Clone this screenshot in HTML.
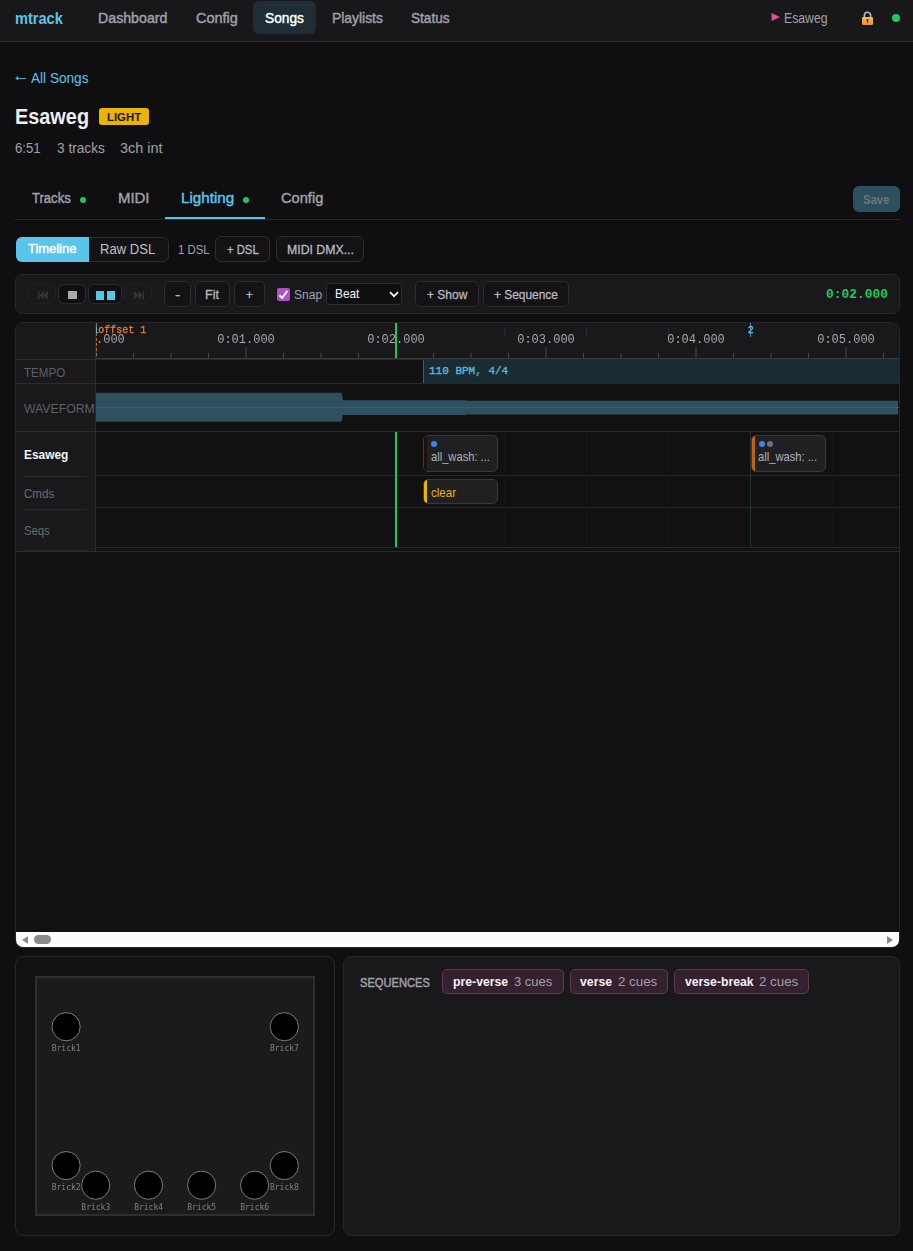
<!DOCTYPE html>
<html lang="en"><head>
<meta charset="utf-8">
<title>mtrack - Esaweg</title>
<style>
*{box-sizing:border-box;margin:0;padding:0}
html,body{width:913px;height:1251px;overflow:hidden;background:#0f0f11}
body{position:relative;font-family:"Liberation Sans","DejaVu Sans",sans-serif;color:#e4e4e7;font-size:14px}
.abs{position:absolute;white-space:nowrap}
.t{position:absolute;white-space:nowrap;display:inline-block;line-height:1.2;transform-origin:0 50%}
.mono{font-family:"Liberation Mono","DejaVu Sans Mono",monospace}
.semi{-webkit-text-stroke:0.45px currentColor}
.med{-webkit-text-stroke:0.3px currentColor}
.b{font-weight:700}
#nav{position:absolute;left:0;top:0;width:913px;height:42px;background:#18181b;border-bottom:1px solid #2a2a2e}
.btn{position:absolute;border:1px solid #2c2c31;border-radius:6px;background:#131315}
.cue{position:absolute;background:#202023;border:1px solid #38383d;border-radius:5px;overflow:hidden}
.cue i{position:absolute;top:4.7px;width:6.4px;height:6.4px;border-radius:50%}
.cue b{position:absolute;left:0;top:0;width:3px;height:100%}
.pill{position:absolute;top:969px;height:25px;background:#35202f;border:1px solid #643652;border-radius:5px}
.hl{position:absolute;height:1px}
.vl{position:absolute;width:1px}
</style>
</head>
<body>

<div id="nav">
<div class="abs" style="left:253px;top:1px;width:63px;height:33px;background:#1f2d36;border-radius:6px"></div>
<div class="t b" style="left: 15px; top: 8.99px; font-size: 16.5px; color: rgb(90, 197, 236); transform: scaleX(0.8835);">mtrack</div>
<div class="t semi" id="rnav" style="left: 98px; top: 9px; font-size: 15.5px; color: rgb(161, 161, 170); transform: scaleX(0.915);">Dashboard</div>
<div class="t semi" style="left: 196.01px; top: 9px; font-size: 15.5px; color: rgb(161, 161, 170); transform: scaleX(0.9327);">Config</div>
<div class="t semi" style="left: 265px; top: 9px; font-size: 15.5px; color: rgb(255, 255, 255); transform: scaleX(0.8872);">Songs</div>
<div class="t semi" style="left: 332px; top: 9px; font-size: 15.5px; color: rgb(161, 161, 170); transform: scaleX(0.8952);">Playlists</div>
<div class="t semi" style="left: 411px; top: 9px; font-size: 15.5px; color: rgb(161, 161, 170); transform: scaleX(0.8769);">Status</div>
<svg class="abs" style="left:771px;top:12px" width="10" height="10" viewBox="0 0 10 10"><polygon points="0.6,0.9 9,4.9 0.6,8.9" fill="#ec4899"></polygon></svg>
<div class="t" style="left: 784px; top: 11.1px; font-size: 13.8px; color: rgb(161, 161, 170); transform: scaleX(0.8881);">Esaweg</div>
<svg class="abs" style="left:861px;top:11px" width="13" height="15" viewBox="0 0 13 15">
<defs><linearGradient id="lk" x1="0" y1="0" x2="0" y2="1"><stop offset="0" stop-color="#f8c04a"></stop><stop offset="1" stop-color="#f08a3e"></stop></linearGradient></defs>
<path d="M3.4 7V4.3a3.1 3.1 0 0 1 6.2 0V7" fill="none" stroke="#b9b9c4" stroke-width="1.6"></path>
<rect x="1" y="6" width="11" height="8" rx="1.3" fill="url(#lk)"></rect>
<circle cx="6.5" cy="9.2" r="1.15" fill="#3d3430"></circle><rect x="6" y="9.4" width="1" height="2.6" fill="#3d3430"></rect>
</svg>
<div class="abs" style="left:892px;top:14px;width:8.4px;height:8.4px;border-radius:50%;background:#22c55e"></div>
</div>
<div class="t" style="left: 12.27px; top: 65.96px; font-size: 17px; color: rgb(90, 197, 236); transform: scaleX(1.0591);">←</div>
<div class="t" style="left: 31px; top: 70px; font-size: 14.1px; color: rgb(90, 197, 236); transform: scaleX(0.9653);">All Songs</div>
<div class="t b" style="left: 14.78px; top: 103px; font-size: 22.5px; color: rgb(238, 238, 240); transform: scaleX(0.8834);">Esaweg</div>
<div class="abs" style="left:99px;top:108px;width:50px;height:17px;background:#eab308;border-radius:3px"></div>
<div class="t b" style="left: 107px; top: 110.85px; font-size: 10.8px; color: rgb(26, 23, 8); transform: scaleX(1.0526);">LIGHT</div>
<div class="t" style="left: 15px; top: 140.95px; font-size: 13.8px; color: rgb(161, 161, 170); transform: scaleX(0.9563);">6:51</div>
<div class="t" style="left: 57px; top: 141.27px; font-size: 13.8px; color: rgb(161, 161, 170); transform: scaleX(0.9902);">3 tracks</div>
<div class="t" style="left: 120px; top: 141.37px; font-size: 13.8px; color: rgb(161, 161, 170); transform: scaleX(1.0439);">3ch int</div>
<div class="hl" style="left:15px;top:219px;width:885px;background:#2a2a2e"></div>
<div class="abs" style="left:165px;top:217px;width:100px;height:2px;background:#5ac5ec"></div>
<div class="t semi" id="rtab" style="left: 31.54px; top: 189px; font-size: 15.5px; color: rgb(161, 161, 170); transform: scaleX(0.843);">Tracks</div>
<div class="t semi" style="left: 118px; top: 189px; font-size: 15.5px; color: rgb(161, 161, 170); transform: scaleX(0.9634);">MIDI</div>
<div class="t semi" style="left: 181px; top: 189px; font-size: 15.5px; color: rgb(90, 197, 236); transform: scaleX(0.9783);">Lighting</div>
<div class="t semi" style="left: 281px; top: 189px; font-size: 15.5px; color: rgb(161, 161, 170); transform: scaleX(0.9441);">Config</div>
<div class="abs" style="left:79.8px;top:196.7px;width:6.4px;height:6.4px;border-radius:50%;background:#22c55e"></div>
<div class="abs" style="left:242.9px;top:196.7px;width:6.4px;height:6.4px;border-radius:50%;background:#22c55e"></div>
<div class="abs" style="left:853px;top:186px;width:47px;height:26px;border-radius:6px;background:#2b5160"></div>
<div class="t b" style="left: 863.01px; top: 192.1px; font-size: 13.5px; color: rgb(117, 115, 117); transform: scaleX(0.8315);">Save</div>
<div class="abs" style="left:16px;top:237px;width:153px;height:25px;border:1px solid #2c2c31;border-radius:6px;background:#131315"></div>
<div class="abs" style="left:16px;top:237px;width:73px;height:25px;background:#5ac5ec;border-radius:6px 0 0 6px"></div>
<div class="t semi" style="left: 28px; top: 241.46px; font-size: 13.2px; color: rgb(255, 255, 255); transform: scaleX(0.9802);">Timeline</div>
<div class="t" style="left: 100.43px; top: 241.95px; font-size: 13.8px; color: rgb(192, 192, 200); transform: scaleX(0.9481);">Raw DSL</div>
<div class="t" style="left: 178px; top: 243px; font-size: 12.4px; color: rgb(161, 161, 170); transform: scaleX(0.92);">1 DSL</div>
<div class="btn" style="left:215px;top:236px;width:55px;height:26px"></div>
<div class="t med" style="left: 227px; top: 243px; font-size: 12.4px; color: rgb(184, 184, 192); transform: scaleX(0.9105);">+ DSL</div>
<div class="btn" style="left:276px;top:236px;width:88px;height:26px"></div>
<div class="t med" style="left: 287px; top: 243px; font-size: 12.4px; color: rgb(184, 184, 192); transform: scaleX(0.9918);">MIDI DMX...</div>
<div class="abs" style="left:15px;top:274px;width:885px;height:40px;background:#19191c;border:1px solid #27272a;border-radius:7px"></div>
<div class="btn" style="left:28px;top:284px;width:28px;height:20px;border-color:#212124;background:#1a1a1d"></div>
<svg class="abs" style="left:37.5px;top:291.2px" width="10" height="8.4" viewBox="0 0 10 8.4"><rect x="0.2" y="0" width="1.3" height="8.4" fill="#37373b"></rect><polygon points="5.6,0 5.6,8.4 1.5,4.2" fill="#37373b"></polygon><polygon points="9.8,0 9.8,8.4 5.6,4.2" fill="#37373b"></polygon></svg>
<div class="btn" style="left:58px;top:284px;width:28px;height:20px;background:#101012"></div>
<div class="abs" style="left:67.8px;top:290.7px;width:9.5px;height:8.8px;background:#a9a9ab"></div>
<div class="btn" style="left:88px;top:284px;width:34px;height:20px;background:#101012"></div>
<div class="abs" style="left:95.5px;top:290.7px;width:8.3px;height:9.1px;background:#5ac5ec"></div>
<div class="abs" style="left:106.8px;top:290.7px;width:8.4px;height:9.1px;background:#5ac5ec"></div>
<div class="btn" style="left:124px;top:284px;width:28px;height:20px;border-color:#212124;background:#1a1a1d"></div>
<svg class="abs" style="left:133.5px;top:291.2px" width="10" height="8.4" viewBox="0 0 10 8.4"><polygon points="0.2,0 0.2,8.4 4.4,4.2" fill="#37373b"></polygon><polygon points="4.4,0 4.4,8.4 8.5,4.2" fill="#37373b"></polygon><rect x="8.5" y="0" width="1.3" height="8.4" fill="#37373b"></rect></svg>
<div class="btn" style="left:164px;top:281px;width:27px;height:26px"></div>
<div class="t med" style="left: 175px; top: 286.83px; font-size: 13.45px; color: rgb(184, 184, 192); transform: scaleX(1.1861);">-</div>
<div class="btn" style="left:195px;top:281px;width:35px;height:26px"></div>
<div class="t med" style="left: 205.25px; top: 287.17px; font-size: 13.45px; color: rgb(184, 184, 192); transform: scaleX(0.9323);">Fit</div>
<div class="btn" style="left:234px;top:281px;width:31px;height:26px"></div>
<div class="t med" style="left: 246px; top: 287.09px; font-size: 13.45px; color: rgb(184, 184, 192); transform: scaleX(0.8458);">+</div>
<svg class="abs" style="left:277px;top:288px" width="13" height="13" viewBox="0 0 13 13"><rect width="13" height="13" rx="2" fill="#b14fc9"></rect><path d="M2.4 7.2 5.1 9.8 10.4 2.9" fill="none" stroke="#fff" stroke-width="1.9"></path></svg>
<div class="t" style="left: 294px; top: 286.72px; font-size: 13.7px; color: rgb(161, 161, 170); transform: scaleX(0.8806);">Snap</div>
<div class="abs" style="left:326.1px;top:283.4px;width:76.3px;height:21.4px;border:1px solid #2c2c31;border-radius:4px;background:#0f0f11"></div>
<div class="t" style="left: 335.26px; top: 286.45px; font-size: 13.3px; color: rgb(244, 244, 245); transform: scaleX(0.889);">Beat</div>
<svg class="abs" style="left:389px;top:291px" width="10" height="7" viewBox="0 0 10 7"><path d="M1 1.2 5 5.2 9 1.2" fill="none" stroke="#f4f4f5" stroke-width="1.7"></path></svg>
<div class="btn" style="left:415px;top:281px;width:64px;height:26px"></div>
<div class="t med" id="rshow" style="left: 427px; top: 287.07px; font-size: 13.45px; color: rgb(184, 184, 192); transform: scaleX(0.8938);">+ Show</div>
<div class="btn" style="left:483px;top:281px;width:86px;height:26px"></div>
<div class="t med" style="left: 494px; top: 287.07px; font-size: 13.45px; color: rgb(184, 184, 192); transform: scaleX(0.8856);">+ Sequence</div>
<div class="t b" style="left: 826px; top: 286.9px; font-size: 13px; color: rgb(34, 197, 94); font-family: &quot;Liberation Mono&quot;, &quot;DejaVu Sans Mono&quot;, monospace; transform: scaleX(0.9936);">0:02.000</div>
<div class="abs" style="left:15px;top:322px;width:885px;height:626px;border:1px solid #27272a;border-radius:8px;background:#111112;overflow:hidden">
<div class="abs" style="left:-16px;top:-323px;width:913px;height:1251px">
<div class="abs" style="left:16px;top:323px;width:80px;height:228px;background:#19191c"></div>
<div class="abs" style="left:16px;top:323px;width:884px;height:35px;background:#19191c"></div>
<div class="hl" style="left:96px;top:358px;width:804px;background:#3a3a3e"></div>
<div class="hl" style="left:16px;top:359px;width:884px;background:#2a2a2e"></div>
<svg class="abs" style="left:96px;top:323px;overflow:visible" width="804" height="36" viewBox="0 0 804 36">
<g stroke="#47474c" stroke-width="1"><line x1="0" y1="24" x2="0" y2="35"></line><line x1="37.5" y1="30" x2="37.5" y2="35"></line><line x1="75" y1="30" x2="75" y2="35"></line><line x1="112.5" y1="30" x2="112.5" y2="35"></line><line x1="150" y1="24" x2="150" y2="35"></line><line x1="187.5" y1="30" x2="187.5" y2="35"></line><line x1="225" y1="30" x2="225" y2="35"></line><line x1="262.5" y1="30" x2="262.5" y2="35"></line><line x1="300" y1="24" x2="300" y2="35"></line><line x1="337.5" y1="30" x2="337.5" y2="35"></line><line x1="375" y1="30" x2="375" y2="35"></line><line x1="412.5" y1="30" x2="412.5" y2="35"></line><line x1="450" y1="24" x2="450" y2="35"></line><line x1="487.5" y1="30" x2="487.5" y2="35"></line><line x1="525" y1="30" x2="525" y2="35"></line><line x1="562.5" y1="30" x2="562.5" y2="35"></line><line x1="600" y1="24" x2="600" y2="35"></line><line x1="637.5" y1="30" x2="637.5" y2="35"></line><line x1="675" y1="30" x2="675" y2="35"></line><line x1="712.5" y1="30" x2="712.5" y2="35"></line><line x1="750" y1="24" x2="750" y2="35"></line><line x1="787.5" y1="30" x2="787.5" y2="35"></line></g>
<g stroke="#1f3039" stroke-width="1"><line x1="408.8" y1="4" x2="408.8" y2="14"></line><line x1="490.6" y1="4" x2="490.6" y2="14"></line><line x1="572.5" y1="4" x2="572.5" y2="14"></line><line x1="736.1" y1="4" x2="736.1" y2="14"></line></g>
<line x1="0.3" y1="0" x2="0.3" y2="35" stroke="#e07b28" stroke-width="1" stroke-dasharray="3 2"></line>
<line x1="654.5" y1="0" x2="654.5" y2="14" stroke="#5ac5ec" stroke-width="1" stroke-opacity="0.7"></line>
</svg>
<div class="abs" style="left:96px;top:323px;width:804px;height:36px;overflow:hidden;will-change:transform">
<div class="t" style="left:-28.8px;top:10px;font-size:12px;color:#a6a6ad;font-family:'Liberation Mono','DejaVu Sans Mono',monospace">0:00.000</div>
<div class="t" style="left:121.2px;top:10px;font-size:12px;color:#a6a6ad;font-family:'Liberation Mono','DejaVu Sans Mono',monospace">0:01.000</div>
<div class="t" style="left:271.2px;top:10px;font-size:12px;color:#a6a6ad;font-family:'Liberation Mono','DejaVu Sans Mono',monospace">0:02.000</div>
<div class="t" style="left:421.2px;top:10px;font-size:12px;color:#a6a6ad;font-family:'Liberation Mono','DejaVu Sans Mono',monospace">0:03.000</div>
<div class="t" style="left:571.2px;top:10px;font-size:12px;color:#a6a6ad;font-family:'Liberation Mono','DejaVu Sans Mono',monospace">0:04.000</div>
<div class="t" style="left:721.2px;top:10px;font-size:12px;color:#a6a6ad;font-family:'Liberation Mono','DejaVu Sans Mono',monospace">0:05.000</div>
<div class="t" style="left:-3px;top:2px;font-size:10px;color:#5ac5ec;font-family:'Liberation Mono','DejaVu Sans Mono',monospace">1</div>
<div class="t" style="left:2.3px;top:2px;font-size:10px;color:#e67e22;font-family:'Liberation Mono','DejaVu Sans Mono',monospace;-webkit-text-stroke:0.3px #e67e22">offset 1</div>
<div class="t" style="left:651.8px;top:2px;font-size:10px;color:#5ac5ec;font-family:'Liberation Mono','DejaVu Sans Mono',monospace;-webkit-text-stroke:0.3px #5ac5ec">2</div>
</div>
<div class="vl" style="left:95px;top:323px;height:228px;background:#2a2a2e"></div>
<div class="hl" style="left:16px;top:383px;width:884px;background:#2a2a2e"></div>
<div class="t" style="left: 24px; top: 364.7px; font-size: 13.3px; color: rgb(95, 95, 102); transform: scaleX(0.8714);">TEMPO</div>
<div class="abs" style="left:423px;top:360px;width:477px;height:23px;background:#1a2c33;border-left:1px solid #3d6070"></div>
<div class="t" style="left: 429px; top: 364.58px; font-size: 11px; color: rgb(90, 182, 217); font-family: &quot;Liberation Mono&quot;, &quot;DejaVu Sans Mono&quot;, monospace; -webkit-text-stroke: 0.35px rgb(90, 182, 217);">110 BPM, 4/4</div>
<div class="hl" style="left:16px;top:431px;width:884px;background:#2a2a2e"></div>
<div class="abs" style="left:16px;top:384px;width:79px;height:47px;overflow:hidden"><div class="t" style="left:8.3px;top:17px;font-size:13.3px;color:#5f5f66;transform:scaleX(.92);">WAVEFORM</div></div>
<svg class="abs" style="left:96px;top:384px" width="803" height="47" viewBox="0 0 803 47">
<path d="M0 8.8 H245.6 L247 16.3 H370.5 V16.8 H802 V30.4 H370.5 V31 H247 L245.6 37.7 H0 Z" fill="#2d515e"></path>
<rect x="0" y="23" width="803" height="1" fill="#336171"></rect>
</svg>
<div class="hl" style="left:96px;top:475px;width:804px;background:#27272b"></div>
<div class="hl" style="left:96px;top:507px;width:804px;background:#27272b"></div>
<div class="hl" style="left:96px;top:547px;width:804px;background:#27272b"></div>
<div class="hl" style="left:16px;top:551px;width:884px;background:#2a2a2e"></div>
<div class="hl" style="left:24px;top:476px;width:63px;background:#2a2a2e"></div>
<div class="hl" style="left:24px;top:509px;width:63px;background:#2a2a2e"></div>
<div class="hl" style="left:24px;top:550px;width:63px;background:#2a2a2e"></div>
<div class="t b" style="left: 24px; top: 447px; font-size: 12.9px; color: rgb(244, 244, 245); transform: scaleX(0.9217);">Esaweg</div>
<div class="t" style="left: 24px; top: 486px; font-size: 13px; color: rgb(106, 106, 113); transform: scaleX(0.8906);">Cmds</div>
<div class="t" style="left: 24px; top: 523.04px; font-size: 13px; color: rgb(106, 106, 113); transform: scaleX(0.8682);">Seqs</div>
<div class="vl" style="left:504px;top:432px;height:115px;background:#17171a"></div>
<div class="vl" style="left:586px;top:432px;height:115px;background:#17171a"></div>
<div class="vl" style="left:668px;top:432px;height:115px;background:#17171a"></div>
<div class="vl" style="left:832px;top:432px;height:115px;background:#17171a"></div>
<div class="vl" style="left:750px;top:432px;height:115px;background:#1f333c"></div>
<div class="cue" style="left:423px;top:435px;width:75px;height:37px"><b style="background:#1e0e06"></b><i style="left:6.8px;background:#3b82f6"></i></div>
<div class="t" style="left: 431px; top: 449.26px; font-size: 12.8px; color: rgb(176, 176, 182); transform: scaleX(0.8718);">all_wash: ...</div>
<div class="cue" style="left:751px;top:435px;width:75px;height:37px"><b style="background:#c2620a"></b><i style="left:6.8px;background:#3b82f6"></i><i style="left:14.7px;background:#6b7280"></i></div>
<div class="t" style="left: 758px; top: 449.26px; font-size: 12.8px; color: rgb(176, 176, 182); transform: scaleX(0.8738);">all_wash: ...</div>
<div class="cue" style="left:423px;top:479px;width:75px;height:25px"><b style="background:#eab308"></b></div>
<div class="t" style="left: 431px; top: 485px; font-size: 12.8px; color: rgb(234, 179, 8); transform: scaleX(0.9034);">clear</div>
<div class="abs" style="left:395px;top:323px;width:2.2px;height:35px;background:#22c55e"></div>
<div class="abs" style="left:395px;top:431.5px;width:2.2px;height:115.5px;background:#22c55e"></div>
<div class="abs" style="left:16px;top:931.6px;width:884px;height:16px;background:#fcfcfc"></div>
<svg class="abs" style="left:21.8px;top:936px" width="6.2" height="8" viewBox="0 0 6.2 8"><polygon points="6.2,0 6.2,8 0,4" fill="#8a8a8a"></polygon></svg>
<svg class="abs" style="left:887.1px;top:936px" width="6.2" height="8" viewBox="0 0 6.2 8"><polygon points="0,0 0,8 6.2,4" fill="#8a8a8a"></polygon></svg>
<div class="abs" style="left:33.9px;top:935px;width:17.1px;height:9px;border-radius:4.5px;background:#8a8a8a"></div>
</div></div>
<div class="abs" style="left:15px;top:956px;width:320px;height:280px;background:#111112;border:1px solid #27272a;border-radius:8px"></div>
<div class="abs" style="left:35px;top:976px;width:280px;height:240px;background:#1b1b1b;border:2px solid #2e2e2e"></div>
<svg class="abs" style="left:0;top:956px;will-change:transform" width="340" height="280" viewBox="0 956 340 280">
<circle cx="66.1" cy="1026.7" r="14.1" fill="#000" stroke="#7c7c7c" stroke-width="1"></circle>
<text x="66.2" y="1051.2" text-anchor="middle" font-family="'DejaVu Sans Mono','Liberation Mono',monospace" font-size="8" fill="#808080">Brick1</text>
<circle cx="284.3" cy="1026.7" r="14.1" fill="#000" stroke="#7c7c7c" stroke-width="1"></circle>
<text x="284.4" y="1051.2" text-anchor="middle" font-family="'DejaVu Sans Mono','Liberation Mono',monospace" font-size="8" fill="#808080">Brick7</text>
<circle cx="66.1" cy="1165.6" r="14.1" fill="#000" stroke="#7c7c7c" stroke-width="1"></circle>
<text x="66.2" y="1190.1" text-anchor="middle" font-family="'DejaVu Sans Mono','Liberation Mono',monospace" font-size="8" fill="#808080">Brick2</text>
<circle cx="284.3" cy="1165.6" r="14.1" fill="#000" stroke="#7c7c7c" stroke-width="1"></circle>
<text x="284.4" y="1190.1" text-anchor="middle" font-family="'DejaVu Sans Mono','Liberation Mono',monospace" font-size="8" fill="#808080">Brick8</text>
<circle cx="95.7" cy="1185.2" r="14.1" fill="#000" stroke="#7c7c7c" stroke-width="1"></circle>
<text x="95.8" y="1209.7" text-anchor="middle" font-family="'DejaVu Sans Mono','Liberation Mono',monospace" font-size="8" fill="#808080">Brick3</text>
<circle cx="148.5" cy="1185.2" r="14.1" fill="#000" stroke="#7c7c7c" stroke-width="1"></circle>
<text x="148.6" y="1209.7" text-anchor="middle" font-family="'DejaVu Sans Mono','Liberation Mono',monospace" font-size="8" fill="#808080">Brick4</text>
<circle cx="201.6" cy="1185.2" r="14.1" fill="#000" stroke="#7c7c7c" stroke-width="1"></circle>
<text x="201.7" y="1209.7" text-anchor="middle" font-family="'DejaVu Sans Mono','Liberation Mono',monospace" font-size="8" fill="#808080">Brick5</text>
<circle cx="254.6" cy="1185.2" r="14.1" fill="#000" stroke="#7c7c7c" stroke-width="1"></circle>
<text x="254.7" y="1209.7" text-anchor="middle" font-family="'DejaVu Sans Mono','Liberation Mono',monospace" font-size="8" fill="#808080">Brick6</text>
</svg>
<div class="abs" style="left:343px;top:956px;width:557px;height:280px;background:#19191c;border:1px solid #27272a;border-radius:8px"></div>
<div class="t semi" style="left: 360px; top: 975.87px; font-size: 12.5px; color: rgb(161, 161, 170); transform: scaleX(0.8895);">SEQUENCES</div>
<div class="pill" style="left:442px;width:122px"></div>
<div class="t b" style="left: 453px; top: 974.68px; font-size: 12.25px; color: rgb(244, 244, 245);">pre-verse</div>
<div class="t" style="left: 514px; top: 974px; font-size: 13.33px; color: rgb(161, 161, 170); transform: scaleX(0.9768);">3 cues</div>
<div class="pill" style="left:570.3px;width:97.6px"></div>
<div class="t b" style="left: 580px; top: 974.68px; font-size: 12.25px; color: rgb(244, 244, 245);">verse</div>
<div class="t" style="left: 618px; top: 974px; font-size: 13.33px; color: rgb(161, 161, 170);">2 cues</div>
<div class="pill" style="left:674.2px;width:134.4px"></div>
<div class="t b" id="rpill" style="left: 684.5px; top: 974.68px; font-size: 12.25px; color: rgb(244, 244, 245); transform: scaleX(0.9962);">verse-break</div>
<div class="t" style="left: 759px; top: 974px; font-size: 13.33px; color: rgb(161, 161, 170);">2 cues</div>


</body></html>
